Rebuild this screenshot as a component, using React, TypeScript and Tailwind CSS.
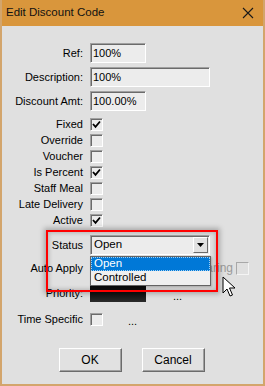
import React from "react";

const sunken =
    "border border-t-[#a0a0a0] border-l-[#a0a0a0] border-r-white border-b-white shadow-[inset_1px_1px_0_#6b6b6b]";

function Check({ on = false, disabled = false }: { on?: boolean; disabled?: boolean }) {
    return (
        <div
            className={
                disabled
                    ? "w-[13px] h-[13px] border border-t-[#a8a8a8] border-l-[#a8a8a8] border-r-[#f4f4f4] border-b-[#f4f4f4] bg-[#e0e0e0]"
                    : `w-[13px] h-[13px] bg-[#ececec] ${sunken} flex items-center justify-center`
            }
        >
            {on && (
                <svg width="9" height="9" viewBox="0 0 9 9">
                    <path d="M1 4 L3.5 6.8 L8 1.5" fill="none" stroke="#000" strokeWidth="1.8" />
                </svg>
            )}
        </div>
    );
}

function Label({ children }: { children: React.ReactNode }) {
    return <div className="w-[81px] text-right shrink-0 leading-none">{children}</div>;
}

function CheckRow({ label, on }: { label: string; on?: boolean }) {
    return (
        <div className="flex items-center gap-[7px] h-[16px]">
            <Label>{label}</Label>
            <Check on={on} />
        </div>
    );
}

function Button({ children }: { children: React.ReactNode }) {
    return (
        <div className="w-[63px] h-[24px] flex items-center justify-center bg-[#e1e1e1] border border-t-white border-l-white border-r-[#6b6b6b] border-b-[#6b6b6b] shadow-[inset_-1px_-1px_0_#a0a0a0] text-[12px]">
            {children}
        </div>
    );
}

export default function App() {
    return (
        <div className="relative w-[265px] h-[386px] flex flex-col bg-[#e0e0e0] border-x-2 border-b-2 border-[#d3a56c] font-['Liberation_Sans',Arial,sans-serif] text-[11px] text-black overflow-hidden">
            {/* Title bar */}
            <div className="h-[26px] -mx-[2px] px-[6px] flex items-center justify-between bg-[#d9963c] shrink-0">
                <span className="text-[11.5px] text-[#111]">Edit Discount Code</span>
                <svg width="12" height="12" viewBox="0 0 12 12" className="mr-[5px]">
                    <path d="M1 1 L11 11 M11 1 L1 11" stroke="#1a1a1a" strokeWidth="1.1" />
                </svg>
            </div>

            {/* Form */}
            <div className="flex flex-col pt-[17px]">
                <div className="flex items-center gap-[7px] h-[20px]">
                    <Label>Ref:</Label>
                    <div className={`w-[56px] h-[20px] bg-[#ececec] ${sunken} flex items-center pl-[2px]`}>100%</div>
                </div>
                <div className="flex items-center gap-[7px] h-[20px] mt-[4px]">
                    <Label>Description:</Label>
                    <div className={`w-[120px] h-[20px] bg-[#ececec] ${sunken} flex items-center pl-[2px]`}>100%</div>
                </div>
                <div className="flex items-center gap-[7px] h-[20px] mt-[4px]">
                    <Label>Discount Amt:</Label>
                    <div className={`w-[56px] h-[20px] bg-[#ececec] ${sunken} flex items-center pl-[2px]`}>100.00%</div>
                </div>

                <div className="flex flex-col mt-[5px]">
                    <CheckRow label="Fixed" on />
                    <CheckRow label="Override" />
                    <CheckRow label="Voucher" />
                    <CheckRow label="Is Percent" on />
                    <CheckRow label="Staff Meal" />
                    <CheckRow label="Late Delivery" />
                    <CheckRow label="Active" on />
                </div>

                <div className="flex items-center gap-[7px] h-[20px] mt-[7px]">
                    <Label>Status</Label>
                    <div className={`w-[120px] h-[20px] bg-[#ececec] ${sunken} flex items-center justify-between pl-[3px] pr-[1px]`}>
                        <span className="text-[11.5px]">Open</span>
                        <div className="w-[15px] h-[16px] bg-[#e1e1e1] border border-t-white border-l-white border-r-[#6b6b6b] border-b-[#6b6b6b] flex items-center justify-center">
                            <svg width="7" height="4" viewBox="0 0 7 4">
                                <path d="M0 0 H7 L3.5 4 Z" fill="#000" />
                            </svg>
                        </div>
                    </div>
                </div>

                <div className="flex items-center gap-[7px] h-[16px] mt-[5px] pr-[14px]">
                    <Label>Auto Apply</Label>
                    <Check />
                    <div className="ml-auto flex items-center gap-[3px]">
                        <span className="text-[#9a9a9a] text-[12px]">Sharing</span>
                        <Check disabled />
                    </div>
                </div>

                <div className="flex items-center gap-[7px] h-[18px] mt-[8px]">
                    <Label>Priority:</Label>
                    <div className="w-[56px] h-[18px] bg-gradient-to-b from-[#0a0a0a] via-[#111] to-[#2a2a2a]" />
                    <span className="ml-[20px] mt-[6px]">...</span>
                </div>

                <div className="flex items-center gap-[7px] h-[16px] mt-[9px]">
                    <Label>Time Specific</Label>
                    <Check />
                    <span className="ml-[18px] mt-[4px]">...</span>
                </div>

                <div className="flex justify-center gap-[20px] mt-[21px] -ml-[2px]">
                    <Button>OK</Button>
                    <Button>Cancel</Button>
                </div>
            </div>

            {/* Open dropdown list */}
            <div className="absolute left-[88px] top-[256px] w-[121px] flex flex-col bg-[#f0f0f0] border border-[#646464] text-[11.5px] shadow-[1px_1px_2px_rgba(0,0,0,0.25)]">
                <div className="h-[14px] flex items-center pl-[2px] bg-[#0078d7] text-white border border-dotted border-[#9fd0f5]">Open</div>
                <div className="h-[14px] flex items-center pl-[3px]">Controlled</div>
            </div>

            {/* Red highlight box */}
            <div className="absolute left-[44px] top-[230px] w-[172px] h-[62px] border-2 border-[#ff0000] shadow-[0_0_5px_2px_rgba(0,0,0,0.25),inset_0_0_4px_1px_rgba(0,0,0,0.2)]" />

            {/* Mouse pointer */}
            <svg className="absolute left-[220px] top-[276px]" width="14" height="22" viewBox="0 0 14 22">
                <path d="M1 1 L1 17 L5 13 L8 20 L10.5 19 L7.5 12 L13 12 Z" fill="#fff" stroke="#000" strokeWidth="1" strokeLinejoin="round" />
            </svg>
        </div>
    );
}
